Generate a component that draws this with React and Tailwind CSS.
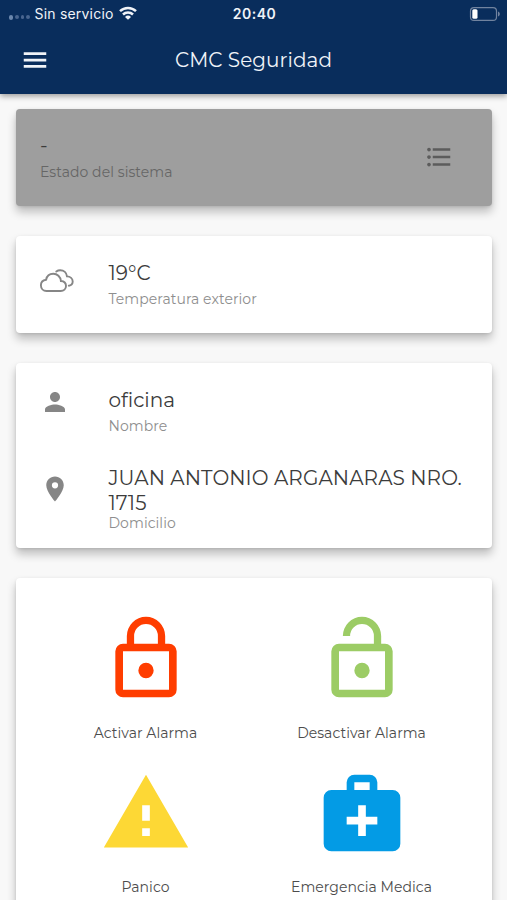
const ICONS = {
  menu: 'M3 18.200h18v-2.200H3v2.200zm0-5.100h18v-2.200H3v2.200zm0-7.300V8h18V5.800H3z',
  list: 'M4 10.5c-.83 0-1.5.67-1.5 1.5s.67 1.5 1.5 1.5 1.5-.67 1.5-1.5-.67-1.5-1.5-1.5zm0-6c-.83 0-1.5.67-1.5 1.5S3.17 7.5 4 7.5 5.5 6.83 5.5 6 4.83 4.5 4 4.5zm0 12c-.83 0-1.5.67-1.5 1.5s.67 1.5 1.5 1.5 1.5-.67 1.5-1.5-.67-1.5-1.5-1.5zM7 19h14v-2H7v2zm0-6h14v-2H7v2zm0-8v2h14V5H7z',
  person: 'M12 12c2.21 0 4-1.79 4-4s-1.79-4-4-4-4 1.79-4 4 1.79 4 4 4zm0 2c-2.67 0-8 1.34-8 4v2h16v-2c0-2.66-5.33-4-8-4z',
  place: 'M12 2C8.13 2 5 5.13 5 9c0 5.25 7 13 7 13s7-7.75 7-13c0-3.87-3.13-7-7-7zm0 9.5a2.5 2.5 0 0 1 0-5 2.5 2.5 0 0 1 0 5z',
  lock: 'M12 17a2 2 0 1 0 0-4 2 2 0 0 0 0 4zm6-9h-1V6A5 5 0 0 0 7 6v2H6a2 2 0 0 0-2 2v10a2 2 0 0 0 2 2h12a2 2 0 0 0 2-2V10a2 2 0 0 0-2-2zM8.9 6a3.1 3.1 0 0 1 6.2 0v2H8.900V6zM18 20H6V10h12v10z',
  unlock: 'M12 17a2 2 0 1 0 0-4 2 2 0 0 0 0 4zm6-9h-1V6A5 5 0 0 0 7 6h1.9a3.1 3.1 0 0 1 6.2 0v2H6a2 2 0 0 0-2 2v10a2 2 0 0 0 2 2h12a2 2 0 0 0 2-2V10a2 2 0 0 0-2-2zm0 12H6V10h12v10z',
  warning: 'M1 21h22L12 2 1 21zm12-3h-2v-2h2v2zm0-4h-2v-4h2v4z',
  medkit: 'M20 6h-4V4a2 2 0 0 0-2-2h-4a2 2 0 0 0-2 2v2H4a2 2 0 0 0-2 2v12a2 2 0 0 0 2 2h16a2 2 0 0 0 2-2V8a2 2 0 0 0-2-2zM10 4h4v2h-4V4zm6 11h-3v3h-2v-3H8v-2h3v-3h2v3h3v2z',
};

const ACTIONS = [
  { label: 'Activar Alarma', icon: 'lock', color: 'text-[#ff3d00]' },
  { label: 'Desactivar Alarma', icon: 'unlock', color: 'text-[#9ccc65]' },
  { label: 'Panico', icon: 'warning', color: 'text-[#fdd835]' },
  { label: 'Emergencia Medica', icon: 'medkit', color: 'text-[#039be5]' },
];

function Icon({ name, className = '' }) {
  return (
    <svg viewBox="0 0 24 24" fill="currentColor" className={`shrink-0 ${className}`}>
      <path d={ICONS[name]} />
    </svg>
  );
}

function CloudIcon() {
  return (
    <svg viewBox="0 0 36 26" fill="none" stroke="currentColor" strokeWidth="1.9" strokeLinecap="round" className="ml-[-1px] h-[26px] w-9 shrink-0">
      <path d="M7.500 23h14.200c3.100 0 5.300-2.100 5.300-4.900 0-2.900-2.100-4.900-5.100-5.100C21.500 8.700 18.300 5.700 14.300 5.700c-3.700 0-6.500 2.400-7.200 6C4 12.100 1.900 14.300 1.900 17.200 1.900 20.500 4.300 23 7.500 23z" />
      <path d="M17.300 3.600c1.200-.9 2.500-1.300 3.900-1.300 3.700 0 6.400 2.500 6.800 6.100 3.300.2 5.700 2.200 5.700 5 0 2.300-1.500 3.900-3.900 4.300" />
    </svg>
  );
}

function StatusBar() {
  return (
    <div className="grid h-7 grid-cols-3 items-center pl-[9px] pr-[7px] font-['Inter',sans-serif] text-[14px]">
      <div className="flex items-center">
        <span className="flex items-center gap-[2px] pt-[6px]">
          <i className="h-[5px] w-1 rounded-full bg-[#6b87ad]" />
          <i className="size-[3.500px] rounded-full bg-[#49658f]" />
          <i className="size-[3.500px] rounded-full bg-[#49658f]" />
          <i className="size-[3.500px] rounded-full bg-[#49658f]" />
        </span>
        <span className="ml-[5px] mt-[-1px] w-[79px] whitespace-nowrap tracking-[0.2px]">Sin servicio</span>
        <svg viewBox="0 0 18 14" fill="none" stroke="currentColor" strokeWidth="2.500" className="ml-[5px] mt-[-2px] h-[14px] w-[18px] shrink-0">
          <path d="M1 5.200a11.500 11.500 0 0 1 16 0" />
          <path d="M4 8.500a7.200 7.200 0 0 1 10 0" />
          <path d="M9 13.800L6 10.900a4.300 4.300 0 0 1 6 0z" fill="currentColor" stroke="none" />
        </svg>
      </div>
      <span className="mt-[-1px] text-center font-semibold tracking-[0.500px]">20:40</span>
      <svg viewBox="0 0 31 14" className="mt-[-1px] h-[14px] w-[31px] justify-self-end">
        <rect x="1.500" y="0.600" width="26" height="12.800" rx="3.500" fill="none" stroke="#71839f" strokeWidth="1.200" />
        <path d="M29 4.500v5c1.300-.4 1.800-1.300 1.800-2.500s-.5-2.100-1.800-2.500z" fill="#71839f" />
        <rect x="3.300" y="2.200" width="5.200" height="9.600" rx="1.500" fill="white" />
      </svg>
    </div>
  );
}

function Card({ className = '', children }) {
  return (
    <section className={`rounded-[4px] shadow-[0_6px_10px_rgba(0,0,0,0.24),0_1px_3px_rgba(0,0,0,0.1)] ${className}`}>
      {children}
    </section>
  );
}

function InfoRow({ icon, className = '', value, children }) {
  return (
    <div className={`flex ${className}`}>
      <div className="flex w-[93px] shrink-0 pl-6 text-[#868686]">{icon}</div>
      <div>
        <p className="text-[20px] leading-[25px] text-[#3c3c3c]">{value}</p>
        {children}
      </div>
    </div>
  );
}

export default function App() {
  return (
    <div className="flex h-[900px] w-[507px] flex-col overflow-hidden bg-[#f8f8f8] font-['Montserrat','Inter',sans-serif]">
      <header className="z-10 h-[94px] shrink-0 bg-[#092d5c] text-[#f0f3f8] shadow-[0_2px_6px_rgba(0,0,0,0.4)]">
        <StatusBar />
        <div className="grid h-[64px] grid-cols-[60px_1fr_60px] items-center">
          <Icon name="menu" className="ml-5 size-[30px]" />
          <h1 className="text-center text-[20px] tracking-[0.060px]">CMC Seguridad</h1>
        </div>
      </header>

      <main className="flex flex-col gap-[30px] px-[15.500px] pt-[14.500px]">
        <Card className="flex h-[97.500px] shrink-0 items-center justify-between bg-[#9e9e9e] pl-[24.500px] pr-[38px]">
          <div className="pt-[5px]">
            <p className="text-[20px] leading-[25px] text-[#3c3c3c]">-</p>
            <p className="text-[14px] leading-[28px] tracking-[0.060px] text-[#666]">Estado del sistema</p>
          </div>
          <Icon name="list" className="size-[30px] text-[#5c5c5c]" />
        </Card>

        <Card className="h-[97px] shrink-0 bg-white pt-[25px]">
          <InfoRow icon={<div className="pt-[7px]"><CloudIcon /></div>} value="19°C">
            <p className="text-[14px] leading-[26px] tracking-[0.060px] text-[#8e8e8e]">Temperatura exterior</p>
          </InfoRow>
        </Card>

        <Card className="h-[185px] shrink-0 bg-white pt-[25px]">
          <InfoRow icon={<Icon name="person" className="mt-[-1px] size-[30px]" />} value="oficina">
            <p className="text-[14px] leading-[26px] tracking-[0.060px] text-[#8e8e8e]">Nombre</p>
          </InfoRow>
          <InfoRow
            className="pt-[27px]"
            icon={<Icon name="place" className="mt-[8px] size-[30px]" />}
            value={<span className="tracking-[0.080px]">JUAN ANTONIO ARGANARAS NRO.<br />1715</span>}
          >
            <p className="text-[14px] leading-[15px] tracking-[0.060px] text-[#8e8e8e]">Domicilio</p>
          </InfoRow>
        </Card>

        <Card className="grid h-[400px] shrink-0 auto-rows-[154px] grid-cols-[216px_216px] justify-center bg-white pt-[34.500px]">
          {ACTIONS.map((a) => (
            <button key={a.label} type="button" className="flex flex-col items-center">
              <Icon name={a.icon} className={`size-[92px] ${a.color}`} />
              <span className="mt-[18px] text-[14px] leading-5 tracking-[0.040px] text-[#4c4c4c]">{a.label}</span>
            </button>
          ))}
        </Card>
      </main>
    </div>
  );
}
